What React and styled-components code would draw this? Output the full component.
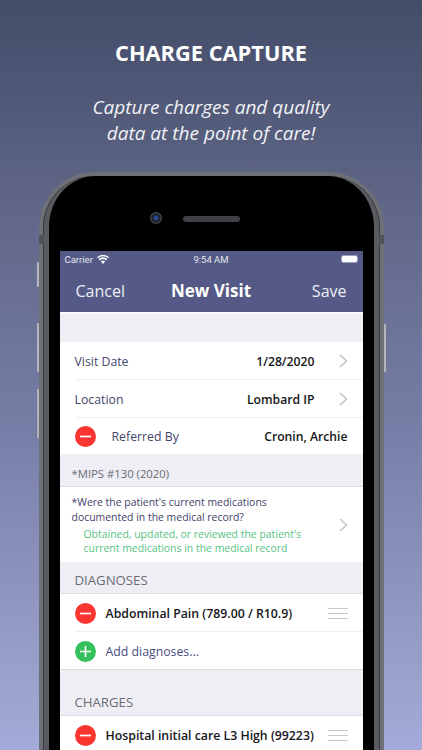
import React from "react";
import styled, { createGlobalStyle } from "styled-components";

const Global = createGlobalStyle`
  html, body { margin: 0; padding: 0; }
  body { font-family: "Open Sans", "Liberation Sans", sans-serif; }
`;

const Page = styled.div`
  width: 422px;
  height: 750px;
  overflow: hidden;
  background: linear-gradient(180deg, #434c69 0%, #5d6484 25%, #7a81aa 60%, #a5abd8 100%);
  display: flex;
  flex-direction: column;
  align-items: center;
  color: #fff;
`;
const Title = styled.h1`
  margin: 38px 0 0;
  font-size: 21.8px;
  line-height: 30px;
  font-weight: 700;
`;
const Tagline = styled.p`
  margin: 26px 0 0;
  font-size: 19px;
  line-height: 26px;
  font-style: italic;
  font-weight: 400;
  text-align: center;
  color: #f1f2f7;
`;
const Shell = styled.div`
  position: relative;
  flex: none;
  margin-top: 26px;
  width: 345px;
  height: 640px;
  box-sizing: border-box;
  padding: 4px 5px 0;
  border-radius: 56px 56px 0 0;
  background: #6d7076;
`;
const Band = styled.i`
  position: absolute;
  top: 63px;
  ${(p) => (p.$side === "left" ? "left: 0;" : "right: 0;")}
  width: 5px;
  height: 9px;
  background: #50535a;
`;
const SideKey = styled.i`
  position: absolute;
  top: ${(p) => p.$top}px;
  ${(p) => (p.$side === "left" ? "left: -3px;" : "right: -3px;")}
  width: 3px;
  height: ${(p) => p.$h}px;
  box-sizing: border-box;
  border-radius: 1px;
  background: #b3b6c2;
  ${(p) => (p.$side === "left" ? "border-left: 1px solid #6f7390;" : "border-right: 1px solid #6f7390;")}
`;
const Bezel = styled.div`
  height: 100%;
  box-sizing: border-box;
  padding: 75px 11px 0;
  border-left: 5px solid #595b61;
  border-right: 5px solid #595b61;
  border-radius: 51px 51px 0 0;
  background: #000;
  box-shadow: -1px 0 0 #37393e, 1px 0 0 #37393e;
`;
const Camera = styled.i`
  position: absolute;
  top: 40px;
  left: 111px;
  width: 12px;
  height: 12px;
  border-radius: 50%;
  background: radial-gradient(circle at 50% 50%, #2a4a96 0 1.8px, #1c2029 3px 4.2px, #45474c 5.2px 6px);
`;
const Speaker = styled.i`
  position: absolute;
  top: 44px;
  left: 144px;
  width: 57px;
  height: 6px;
  border-radius: 3px;
  background: #3f4043;
`;
const Screen = styled.div`
  background: #eeeef4;
  height: 600px;
`;
const Header = styled.div`
  background: #545985;
  height: 61px;
  color: #fff;
`;
const StatusBar = styled.div`
  display: grid;
  grid-template-columns: 1fr auto 1fr;
  align-items: center;
  height: 16px;
  padding: 0 5px;
  font-size: 9.5px;
  color: #e4e5ee;
  font-family: "Roboto", "Liberation Sans", sans-serif;
`;
const Carrier = styled.span`
  display: flex;
  align-items: center;
  gap: 4px;
`;
const Battery = styled.span`
  justify-self: end;
  box-sizing: border-box;
  width: 17px;
  height: 8px;
  border-radius: 2.5px;
  border: 1px solid #9a9dbb;
  background: #fff;
`;
const NavBar = styled.div`
  display: grid;
  grid-template-columns: 1fr auto 1fr;
  align-items: center;
  height: 45px;
  box-sizing: border-box;
  padding: 2px 16px 0;
  font-size: 16px;
  color: #eeeef5;
`;
const NavTitle = styled.span`
  font-weight: 700;
  font-size: 17px;
  color: #fff;
`;
const NavAction = styled.span`
  justify-self: ${(p) => (p.$end ? "end" : "start")};
`;
const Spacer = styled.div`
  height: ${(p) => p.$h}px;
  border-top: 2px solid #fafafc;
`;
const Rows = styled.div`
  background: #fff;
`;
const Row = styled.div`
  display: flex;
  align-items: center;
  height: ${(p) => p.$h || 38}px;
  box-sizing: border-box;
  padding: 0 15px;
  position: relative;
  font-size: 12.3px;
  color: #43466a;
  ${(p) =>
    p.$line &&
    `&::after { content: ""; position: absolute; left: ${p.$line === "full" ? 0 : 15}px; right: 0; bottom: 0; height: 1px; background: ${p.$line === "full" ? "#dcdce2" : "#efeff2"}; }`}
`;
const Value = styled.span`
  margin-left: auto;
  color: #16161a;
  font-weight: 600;
  font-size: 12.2px;
`;
const Chevron = styled.svg`
  flex: none;
  width: 9px;
  height: 14px;
  margin-left: 24px;
  fill: none;
  stroke: #c4c4c9;
  stroke-width: 1.6;
`;
const Round = styled.svg`
  flex: none;
  width: 21px;
  height: 21px;
  margin-right: ${(p) => p.$gap}px;
`;
const SectionLabel = styled.div`
  display: flex;
  align-items: ${(p) => (p.$end ? "flex-end" : "center")};
  height: ${(p) => p.$h}px;
  box-sizing: border-box;
  padding: ${(p) => (p.$end ? "0 0 4px 15px" : "6px 0 0 12px")};
  font-size: ${(p) => (p.$end ? 13.2 : 11.3)}px;
  color: #6b6c74;
  border-bottom: 1px solid #dcdce2;
`;
const Question = styled.div`
  display: flex;
  align-items: center;
  height: 75px;
  background: #fff;
  padding: 0 15px 0 12px;
`;
const QuestionBody = styled.div`
  flex: 1;
  padding-top: 2px;
  font-size: 10.45px;
  line-height: 14.4px;
  color: #3f4268;
`;
const Answer = styled.div`
  margin: 3px 0 0 12px;
  color: #58c282;
`;
const ItemName = styled.span`
  color: #16161a;
  font-weight: 600;
  font-size: 12.3px;
  white-space: nowrap;
`;
const AddLink = styled.span`
  color: #4a4e80;
  font-size: 12.3px;
`;
const Grip = styled.span`
  margin-left: auto;
  flex: none;
  width: 20px;
  height: 11px;
  border-top: 1px solid #c6c6cb;
  border-bottom: 1px solid #c6c6cb;
  box-sizing: border-box;
  position: relative;
  &::after {
    content: "";
    position: absolute;
    left: 0;
    right: 0;
    top: 4px;
    height: 1px;
    background: #c6c6cb;
  }
`;

const Sign = ({ plus, gap }) => (
  <Round $gap={gap} viewBox="0 0 21 21">
    <circle cx="10.5" cy="10.5" r="10.5" fill={plus ? "#34c05a" : "#fb3630"} />
    <path d={plus ? "M5 10.5h11M10.5 5v11" : "M5 10.5h11"} stroke="#fff" strokeWidth="1.7" />
  </Round>
);
const Next = () => (
  <Chevron viewBox="0 0 9 14">
    <path d="M1 1l6.5 6L1 13" />
  </Chevron>
);

export default function App() {
  return (
    <Page>
      <Global />
      <Title>CHARGE CAPTURE</Title>
      <Tagline>
        Capture charges and quality
        <br />
        data at the point of care!
      </Tagline>
      <Shell>
        <Band $side="left" />
        <Band $side="right" />
        <SideKey $side="left" $top={90} $h={25} />
        <SideKey $side="left" $top={151} $h={49} />
        <SideKey $side="left" $top={217} $h={49} />
        <SideKey $side="right" $top={152} $h={48} />
        <Camera />
        <Speaker />
        <Bezel>
          <Screen>
            <Header>
              <StatusBar>
                <Carrier>
                  Carrier
                  <svg width="12" height="9" viewBox="0 0 12 9">
                    <path
                      d="M6 9L3.9 6.6a3 3 0 014.2 0zM2.9 5.5L1.6 4a6.6 6.6 0 018.8 0L9.1 5.5a4.6 4.6 0 00-6.2 0zM.9 3.2L0 2.2a9 9 0 0112 0l-.9 1a7.6 7.6 0 00-10.2 0z"
                      fill="#fff"
                    />
                  </svg>
                </Carrier>
                <span>9:54 AM</span>
                <Battery />
              </StatusBar>
              <NavBar>
                <NavAction>Cancel</NavAction>
                <NavTitle>New Visit</NavTitle>
                <NavAction $end>Save</NavAction>
              </NavBar>
            </Header>
            <Spacer $h={28} />
            <Rows>
              <Row $line>
                Visit Date
                <Value>1/28/2020</Value>
                <Next />
              </Row>
              <Row $line>
                Location
                <Value>Lombard IP</Value>
                <Next />
              </Row>
              <Row $h={36}>
                <Sign gap={16} />
                Referred By
                <Value>Cronin, Archie</Value>
              </Row>
            </Rows>
            <SectionLabel $h={33}>*MIPS #130 (2020)</SectionLabel>
            <Question>
              <QuestionBody>
                *Were the patient's current medications
                <br />
                documented in the medical record?
                <Answer>
                  Obtained, updated, or reviewed the patient's
                  <br />
                  current medications in the medical record
                </Answer>
              </QuestionBody>
              <Next />
            </Question>
            <SectionLabel $end $h={32}>DIAGNOSES</SectionLabel>
            <Rows>
              <Row $line>
                <Sign gap={10} />
                <ItemName>Abdominal Pain (789.00 / R10.9)</ItemName>
                <Grip />
              </Row>
              <Row $h={38} $line="full">
                <Sign plus gap={10} />
                <AddLink>Add diagnoses...</AddLink>
              </Row>
            </Rows>
            <SectionLabel $end $h={46}>CHARGES</SectionLabel>
            <Rows>
              <Row>
                <Sign gap={10} />
                <ItemName>Hospital initial care L3 High (99223)</ItemName>
                <Grip />
              </Row>
            </Rows>
          </Screen>
        </Bezel>
      </Shell>
    </Page>
  );
}
